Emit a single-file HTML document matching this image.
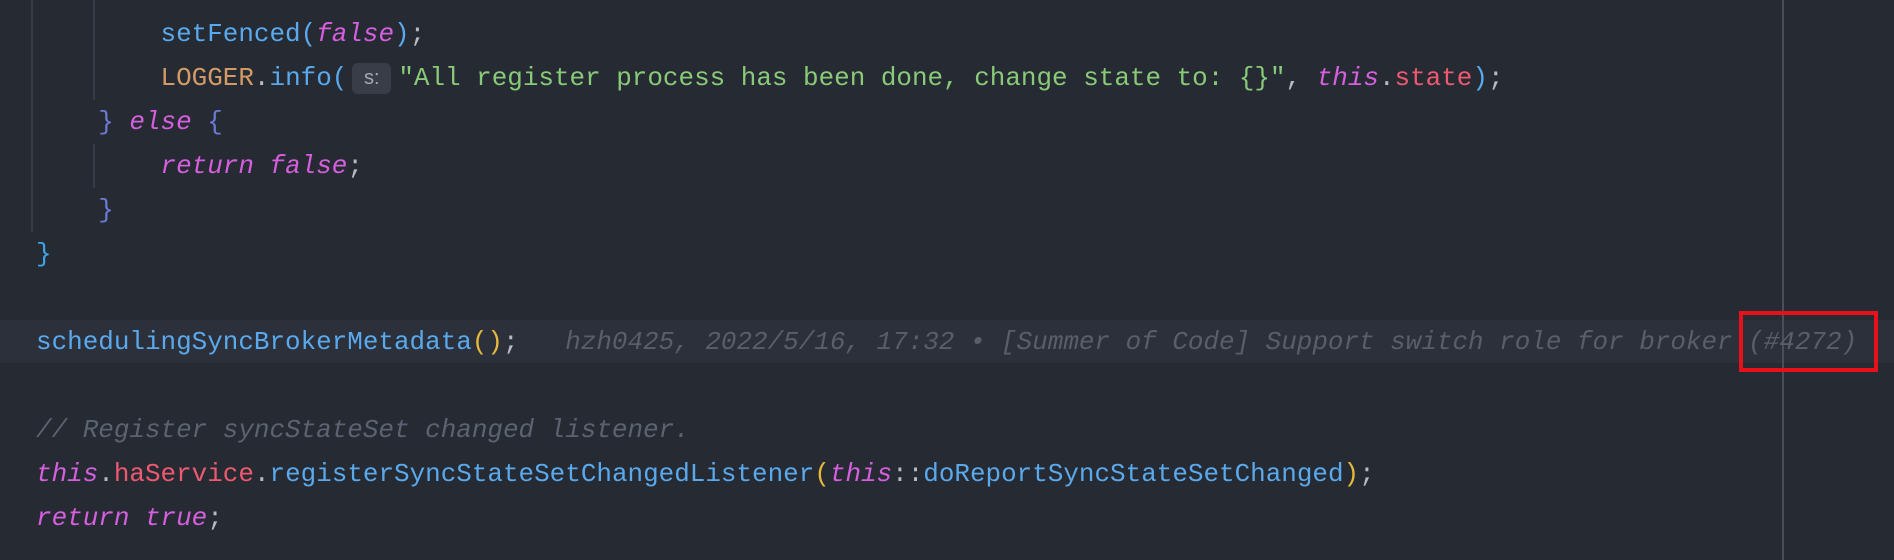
<!DOCTYPE html>
<html><head><meta charset="utf-8"><style>
html,body{margin:0;padding:0;}
body{width:1894px;height:560px;background:#262a33;position:relative;overflow:hidden;font-family:"Liberation Mono","DejaVu Sans Mono",monospace;font-size:25.95px;}
.l{position:absolute;left:36px;height:44px;line-height:44px;white-space:pre;color:#b5bac4;}
.fn{color:#5aa9ec}.kw{color:#d55fde;font-style:italic}.str{color:#89ca78}.fld{color:#ef596f}.cls{color:#d19a66}
.br{color:#6c7bd6}.br0{color:#3fa3e8}.y{color:#e5b93b}.cm{color:#5c6370;font-style:italic}.pu{color:#b5bac4}
.bl{color:#595e6a;font-style:italic}
.hint{display:inline-block;vertical-align:top;margin-top:7px;height:31px;line-height:31px;width:39px;background:#393d47;border-radius:6px;color:#a4a8b0;font-size:20px;text-align:center;margin-left:5px;margin-right:7px;font-family:"Liberation Sans",sans-serif;}
.g{position:absolute;width:2px;background:#363b48;}
</style></head><body>
<div style="position:absolute;left:0;top:320px;width:1894px;height:43px;background:#2c303a;"></div>
<div class="g" style="left:31px;top:0;height:232px"></div>
<div class="g" style="left:93px;top:0;height:100px"></div>
<div class="g" style="left:93px;top:144px;height:44px"></div>
<div style="position:absolute;left:1782px;top:0;width:2px;height:560px;background:#4a4e57"></div>

<div class="l" style="top:12px"><span>        </span><span class="fn">setFenced</span><span class="fn">(</span><span class="kw">false</span><span class="fn">)</span>;</div>
<div class="l" style="top:56px"><span>        </span><span class="cls">LOGGER</span>.<span class="fn">info(</span><span class="hint">s:</span><span class="str">"All register process has been done, change state to: {}"</span>, <span class="kw">this</span>.<span class="fld">state</span><span class="fn">)</span>;</div>
<div class="l" style="top:100px"><span>    </span><span class="br">}</span> <span class="kw">else</span> <span class="br">{</span></div>
<div class="l" style="top:144px"><span>        </span><span class="kw">return</span> <span class="kw">false</span>;</div>
<div class="l" style="top:188px"><span>    </span><span class="br">}</span></div>
<div class="l" style="top:232px"><span class="br0">}</span></div>
<div class="l" style="top:320px"><span class="fn">schedulingSyncBrokerMetadata</span><span class="y">()</span>;   <span class="bl">hzh0425, 2022/5/16, 17:32 • [Summer of Code] Support switch role for broker (#4272)</span></div>
<div class="l" style="top:408px"><span class="cm">// Register syncStateSet changed listener.</span></div>
<div class="l" style="top:452px"><span class="kw">this</span>.<span class="fld">haService</span>.<span class="fn">registerSyncStateSetChangedListener</span><span class="y">(</span><span class="kw">this</span>::<span class="fn">doReportSyncStateSetChanged</span><span class="y">)</span>;</div>
<div class="l" style="top:496px"><span class="kw">return</span> <span class="kw">true</span>;</div>

<div style="position:absolute;left:1739px;top:311px;width:131px;height:53px;border:4px solid #e8101a;"></div>
</body></html>
